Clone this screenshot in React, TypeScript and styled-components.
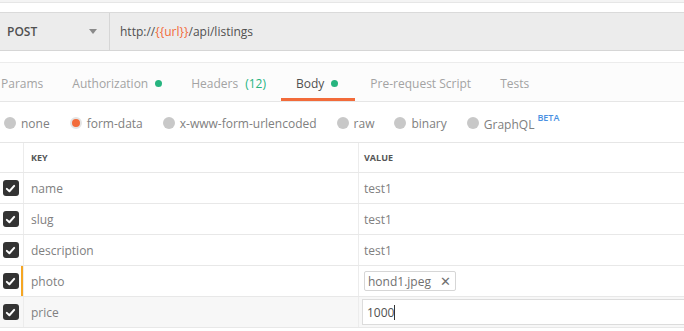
import styled, { createGlobalStyle } from 'styled-components'

const GlobalStyle = createGlobalStyle`
  body {
    margin: 0;
    background: #ffffff;
    font-family: 'Open Sans', 'Liberation Sans', sans-serif;
    color: #505050;
  }
`

const Page = styled.div`
  width: 684px;
  height: 331px;
  overflow: hidden;
  background: #ffffff;
`

const TopStrip = styled.div`
  height: 2px;
  background: #f4f4f4;
  border-bottom: 1px solid #e6e6e6;
  margin-bottom: 9px;
`

const RequestBar = styled.div`
  display: flex;
  height: 37px;
  background: #ececec;
  border-top: 1px solid #dadada;
  border-bottom: 1px solid #d6d6d6;
`

const Method = styled.div`
  display: flex;
  align-items: center;
  justify-content: space-between;
  width: 110px;
  padding: 0 10px 0 7px;
  box-sizing: border-box;
  border-right: 1px solid #d6d6d6;
  font-size: 12px;
  font-weight: 600;
  color: #505050;
`

const Caret = styled.span`
  width: 0;
  height: 0;
  border-left: 4px solid transparent;
  border-right: 4px solid transparent;
  border-top: 5px solid #8a8a8a;
  margin-right: 2px;
`

const Url = styled.div`
  display: flex;
  align-items: center;
  padding-left: 10px;
  font-size: 12px;
  color: #505050;
`

const Variable = styled.span`
  color: #f26b3a;
`

const Tabs = styled.div`
  display: flex;
  align-items: stretch;
  height: 38px;
  margin-top: 11px;
  margin-left: -13px;
  border-top: 1px solid #ececec;
  border-bottom: 1px solid #e6e6e6;
  background: #fcfcfc;
`

const Tab = styled.div<{ $active?: boolean }>`
  display: flex;
  align-items: center;
  gap: 7px;
  padding: 5px ${({ $active }) => ($active ? '17px 0 15px' : '14px 0')};
  margin-right: 1px;
  font-size: 12px;
  color: ${({ $active }) => ($active ? '#505050' : '#a3a3a3')};
  border-bottom: 3px solid ${({ $active }) => ($active ? '#f26b3a' : 'transparent')};
  box-sizing: border-box;
`

const Dot = styled.span`
  width: 7px;
  height: 7px;
  border-radius: 50%;
  background: #26b47f;
`

const Count = styled.span`
  color: #26b47f;
`

const Modes = styled.div`
  display: flex;
  align-items: center;
  height: 40px;
  padding-left: 4px;
  padding-top: 2px;
  box-sizing: border-box;
  gap: 20px;
`

const Mode = styled.label`
  display: flex;
  align-items: center;
  gap: 5px;
  font-size: 12px;
  color: #808080;
`

const Radio = styled.span<{ $checked?: boolean }>`
  width: 12px;
  height: 12px;
  border-radius: 50%;
  box-sizing: border-box;
  background: ${({ $checked }) => ($checked ? '#f26b3a' : '#c8c8c8')};
  border: ${({ $checked }) => ($checked ? '2px solid #e4e4e4' : 'none')};
`

const Beta = styled.sup`
  color: #4a90e2;
  font-size: 9px;
  font-weight: 600;
  margin-left: 3px;
  position: relative;
  top: -3px;
`

const Table = styled.div`
  border-top: 1px solid #e6e6e6;
`

const Row = styled.div<{ $header?: boolean; $hover?: boolean }>`
  display: grid;
  grid-template-columns: 24px 335px 1fr;
  height: ${({ $header }) => ($header ? '29px' : '30px')};
  border-bottom: 1px solid #e8e8e8;
  background: ${({ $hover }) => ($hover ? '#f7f7f7' : '#ffffff')};
`

const CheckCell = styled.div`
  display: flex;
  align-items: center;
  justify-content: center;
  padding-right: 2px;
  border-right: 1px solid #ececec;
`

const Cell = styled.div<{ $marked?: boolean }>`
  display: flex;
  align-items: center;
  font-size: 12px;
  color: #808080;
  border-right: 1px solid #ececec;
  box-shadow: ${({ $marked }) => ($marked ? 'inset 2px 0 0 #f5a623' : 'none')};
  margin-left: ${({ $marked }) => ($marked ? '-3px' : '0')};
  padding-left: ${({ $marked }) => ($marked ? '10px' : '7px')};
`

const ValueCell = styled.div`
  display: flex;
  align-items: center;
  padding-left: 5px;
  font-size: 12px;
  color: #808080;
`

const HeadLabel = styled.span`
  font-size: 9px;
  font-weight: 700;
  color: #555555;
`

const Box = styled.span`
  width: 16px;
  height: 16px;
  border-radius: 3px;
  background: #333333;
  display: flex;
  align-items: center;
  justify-content: center;
`

const FileChip = styled.span`
  display: flex;
  align-items: center;
  gap: 9px;
  height: 18px;
  padding: 0 4px 0 3px;
  border: 1px solid #d6d6d6;
  border-radius: 2px;
  color: #707070;
  font-size: 12px;
`

const Close = styled.span`
  font-size: 13px;
  color: #707070;
`

const Input = styled.div`
  display: flex;
  align-items: center;
  flex: 1;
  height: 24px;
  margin-left: -2px;
  padding-left: 4px;
  border: 1px solid #dcdcdc;
  border-right: none;
  background: #ffffff;
  color: #505050;
  font-size: 12px;
`

const Cursor = styled.span`
  width: 1px;
  height: 15px;
  background: #333333;
`

const Check = () => (
  <Box>
    <svg width="11" height="11" viewBox="0 0 12 12">
      <path d="M2 6.4 L4.8 9 L10 3.2" fill="none" stroke="#ffffff" strokeWidth="2.2" strokeLinecap="round" strokeLinejoin="round" />
    </svg>
  </Box>
)

const rows = [
  { key: 'name', value: 'test1' },
  { key: 'slug', value: 'test1' },
  { key: 'description', value: 'test1' },
  { key: 'photo', value: 'file' },
  { key: 'price', value: 'input' },
]

const modes = ['none', 'form-data', 'x-www-form-urlencoded', 'raw', 'binary']

const App = () => {
  return (
    <Page>
      <GlobalStyle />
      <TopStrip />
      <RequestBar>
        <Method>
          POST
          <Caret />
        </Method>
        <Url>
          http://<Variable>{'{{url}}'}</Variable>/api/listings
        </Url>
      </RequestBar>
      <Tabs>
        <Tab>Params</Tab>
        <Tab>Authorization<Dot /></Tab>
        <Tab>Headers <Count>(12)</Count></Tab>
        <Tab $active>Body<Dot /></Tab>
        <Tab>Pre-request Script</Tab>
        <Tab>Tests</Tab>
      </Tabs>
      <Modes>
        {modes.map((m) => (
          <Mode key={m}>
            <Radio $checked={m === 'form-data'} />
            {m}
          </Mode>
        ))}
        <Mode>
          <Radio />
          <span>
            GraphQL<Beta>BETA</Beta>
          </span>
        </Mode>
      </Modes>
      <Table>
        <Row $header>
          <CheckCell />
          <Cell><HeadLabel>KEY</HeadLabel></Cell>
          <ValueCell><HeadLabel>VALUE</HeadLabel></ValueCell>
        </Row>
        {rows.map((r) => (
          <Row key={r.key} $hover={r.key === 'price'}>
            <CheckCell><Check /></CheckCell>
            <Cell $marked={r.key === 'photo'}>{r.key}</Cell>
            <ValueCell>
              {r.value === 'file' ? (
                <FileChip>hond1.jpeg<Close>✕</Close></FileChip>
              ) : r.value === 'input' ? (
                <Input>1000<Cursor /></Input>
              ) : (
                r.value
              )}
            </ValueCell>
          </Row>
        ))}
      </Table>
    </Page>
  )
}

export default App
